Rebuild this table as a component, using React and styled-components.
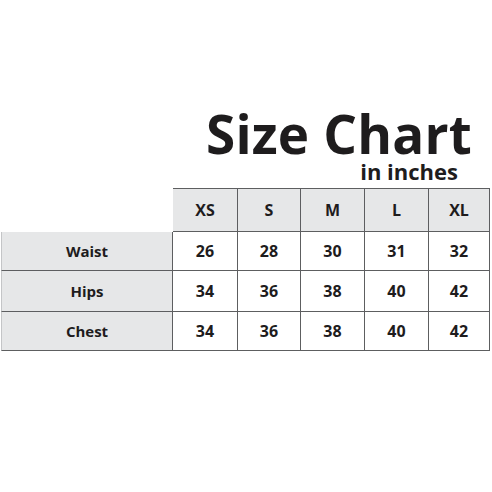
import styled, { createGlobalStyle } from "styled-components";

const sizes = ["XS", "S", "M", "L", "XL"];
const rows = [
  { name: "Waist", values: [26, 28, 30, 31, 32] },
  { name: "Hips", values: [34, 36, 38, 40, 42] },
  { name: "Chest", values: [34, 36, 38, 40, 42] },
];

export default function App() {
  return (
    <>
      <GlobalStyle />
      <Page>
        <TitleWrap>
          <h1>Size Chart</h1>
          <p>in inches</p>
        </TitleWrap>
        <Chart>
          <Corner />
          {sizes.map((s) => (
            <Cell key={s} $head $top>
              {s}
            </Cell>
          ))}
          {rows.map((row) => (
            <Row key={row.name} row={row} />
          ))}
        </Chart>
      </Page>
    </>
  );
}

function Row({ row }) {
  return (
    <>
      <Cell $head $label>
        {row.name}
      </Cell>
      {row.values.map((v, i) => (
        <Cell key={i}>{v}</Cell>
      ))}
    </>
  );
}

const GlobalStyle = createGlobalStyle`
  html, body {
    margin: 0;
    padding: 0;
    background: #fff;
  }
  body {
    font-family: "Open Sans", "DejaVu Sans", sans-serif;
    color: #1e1c1d;
  }
`;

const Page = styled.div`
  width: 492px;
  height: 492px;
  overflow: hidden;
  background: #fff;
`;

const TitleWrap = styled.div`
  display: flex;
  flex-direction: column;
  align-items: flex-end;
  padding: 107px 20px 0 0;
  > h1 {
    margin: 0;
    font-size: 53px;
    font-weight: 700;
    line-height: 53px;
    letter-spacing: 0.2px;
  }
  > p {
    margin: 0 14px 0 0;
    font-size: 22px;
    font-weight: 700;
    line-height: 22px;
  }
`;

const Chart = styled.div`
  display: grid;
  grid-template-columns: 172px 65px 63px 64px 64px 61px;
  grid-template-rows: 44px 39px 41px 39px;
  margin: 6px 0 0 1px;
`;

const Corner = styled.div``;

const Cell = styled.div`
  display: flex;
  align-items: center;
  justify-content: center;
  font-size: ${(p) => (p.$label ? "15px" : "16px")};
  font-weight: 700;
  color: #1e1c1d;
  background: ${(p) => (p.$head ? "#e6e7e8" : "#fff")};
  border-right: 1px solid #5d5e60;
  border-bottom: 1px solid #5d5e60;
  border-top: ${(p) => (p.$top ? "1px solid #5d5e60" : "none")};
  border-left: ${(p) => (p.$label ? "1px solid #c4c5c7" : "none")};
`;
